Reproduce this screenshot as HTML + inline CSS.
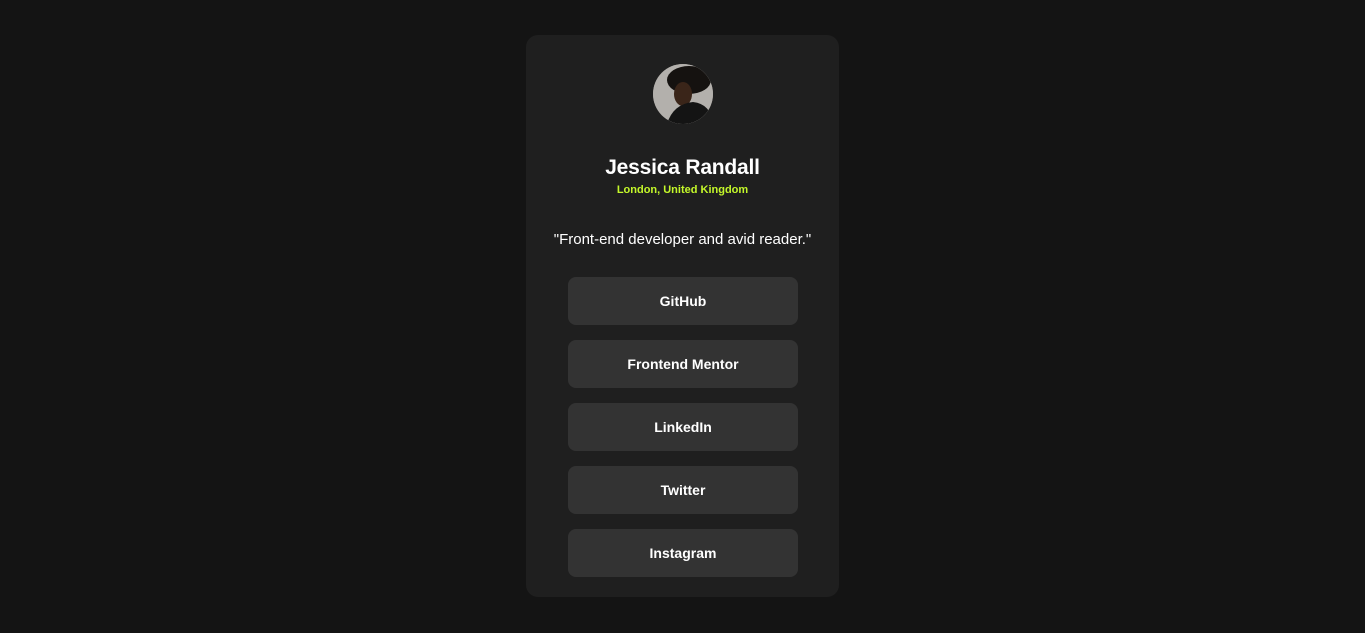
<!DOCTYPE html>
<html><head><meta charset="utf-8"><style>
html,body{margin:0;padding:0;background:#141414;width:1365px;height:633px;overflow:hidden;font-family:"Liberation Sans",sans-serif;color:#fff}
.card{position:absolute;left:526px;top:35px;width:313px;height:562px;background:#1f1f1f;border-radius:12px}
.av{position:absolute;left:127px;top:29px;width:60px;height:60px;border-radius:50%;overflow:hidden;background:#8a8784}
h1{position:absolute;top:121px;left:0;width:100%;margin:0;text-align:center;font-size:21px;font-weight:bold;letter-spacing:-0.2px}
.loc{position:absolute;top:149px;left:0;width:100%;text-align:center;font-size:11px;font-weight:bold;color:#c4f82a}
.q{position:absolute;top:196px;left:0;width:100%;text-align:center;font-size:15px}
.b{position:absolute;left:42px;width:230px;height:48px;background:#333;border-radius:8px;text-align:center;line-height:48px;font-size:14px;font-weight:bold}
</style></head><body>
<div class="card">
<div class="av"><svg width="60" height="60" viewBox="0 0 60 60"><rect width="60" height="60" fill="#b3b0ac"/><ellipse cx="36" cy="16" rx="22" ry="14" fill="#151210"/><ellipse cx="30" cy="30" rx="9" ry="12" fill="#3a2519"/><path d="M14 60 Q20 40 40 38 Q58 40 60 60Z" fill="#141414"/></svg></div>
<h1>Jessica Randall</h1>
<div class="loc">London, United Kingdom</div>
<div class="q">"Front-end developer and avid reader."</div>
<div class="b" style="top:242px">GitHub</div>
<div class="b" style="top:305px">Frontend Mentor</div>
<div class="b" style="top:368px">LinkedIn</div>
<div class="b" style="top:431px">Twitter</div>
<div class="b" style="top:494px">Instagram</div>
</div>
</body></html>
